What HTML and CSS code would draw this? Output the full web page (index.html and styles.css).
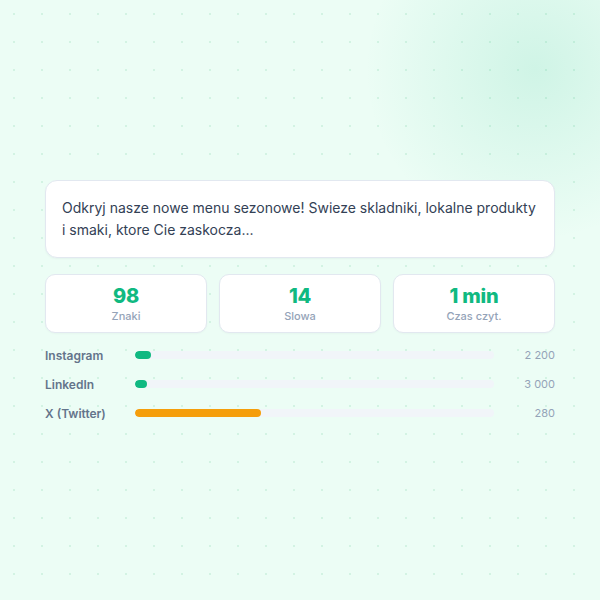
FILE: index.html
```html
<!DOCTYPE html>
<html lang="pl">
<head>
<meta charset="utf-8">
<link rel="stylesheet" href="styles.css">
</head>
<body>
<main class="wrap">
  <section class="post">Odkryj nasze nowe menu sezonowe! Swieze skladniki, lokalne produkty i smaki, ktore Cie zaskocza...</section>
  <section class="stats">
    <div class="stat"><div class="num">98</div><div class="lbl">Znaki</div></div>
    <div class="stat"><div class="num">14</div><div class="lbl">Slowa</div></div>
    <div class="stat"><div class="num">1 min</div><div class="lbl">Czas czyt.</div></div>
  </section>
  <section class="limits">
    <div class="row"><span class="name">Instagram</span><div class="track"><div class="fill ok" style="width:4.45%"></div></div><span class="val">2 200</span></div>
    <div class="row"><span class="name">LinkedIn</span><div class="track"><div class="fill ok" style="width:3.27%"></div></div><span class="val">3 000</span></div>
    <div class="row"><span class="name">X (Twitter)</span><div class="track"><div class="fill warn" style="width:35%"></div></div><span class="val">280</span></div>
  </section>
</main>
</body>
</html>
```
FILE: styles.css
```css
html, body { margin: 0; padding: 0; }
body {
  width: 600px;
  height: 600px;
  overflow: hidden;
  font-family: Inter, "Noto Sans", sans-serif;
  background-color: #ecfdf5;
  background-image:
    radial-gradient(circle 170px at 535px 70px, rgba(16,185,129,0.13) 0%, rgba(16,185,129,0.07) 45%, rgba(16,185,129,0) 100%),
    radial-gradient(circle, #d3f3e3 1px, transparent 1.3px);
  background-size: 600px 600px, 28px 28px;
  background-repeat: no-repeat, repeat;
}
.wrap {
  padding: 180px 45px 0 45px;
  display: flex;
  flex-direction: column;
}
.post {
  background: #fff;
  border: 1px solid #e2e8f0;
  border-radius: 12px;
  padding: 16px 16px;
  font-size: 14px;
  line-height: 22px;
  color: #334155;
  box-shadow: 0 1px 2px rgba(15,23,42,0.04);
}
.stats {
  margin-top: 16px;
  display: grid;
  grid-template-columns: repeat(3, 1fr);
  gap: 12px;
}
.stat {
  background: #fff;
  border: 1px solid #e2e8f0;
  border-radius: 10px;
  padding: 11px 8px 9px;
  text-align: center;
  box-shadow: 0 1px 2px rgba(15,23,42,0.03);
}
.num {
  font-size: 20px;
  line-height: 20px;
  font-weight: 800;
  color: #10b981;
  letter-spacing: -0.2px;
}
.lbl {
  margin-top: 3px;
  font-size: 11px;
  line-height: 14px;
  color: #94a3b8;
  font-weight: 500;
}
.limits {
  margin-top: 13px;
  display: flex;
  flex-direction: column;
  gap: 11px;
}
.row {
  display: flex;
  align-items: center;
  height: 18px;
}
.name {
  width: 90px;
  flex: none;
  font-size: 12px;
  font-weight: 600;
  color: #64748b;
}
.track {
  flex: 1;
  height: 8px;
  border-radius: 4px;
  background: #f1f5f9;
  overflow: hidden;
}
.fill { height: 100%; border-radius: 4px; }
.fill.ok { background: #10b981; }
.fill.warn { background: #f59e0b; }
.val {
  width: 61px;
  flex: none;
  text-align: right;
  font-size: 11px;
  color: #94a3b8;
}
```
